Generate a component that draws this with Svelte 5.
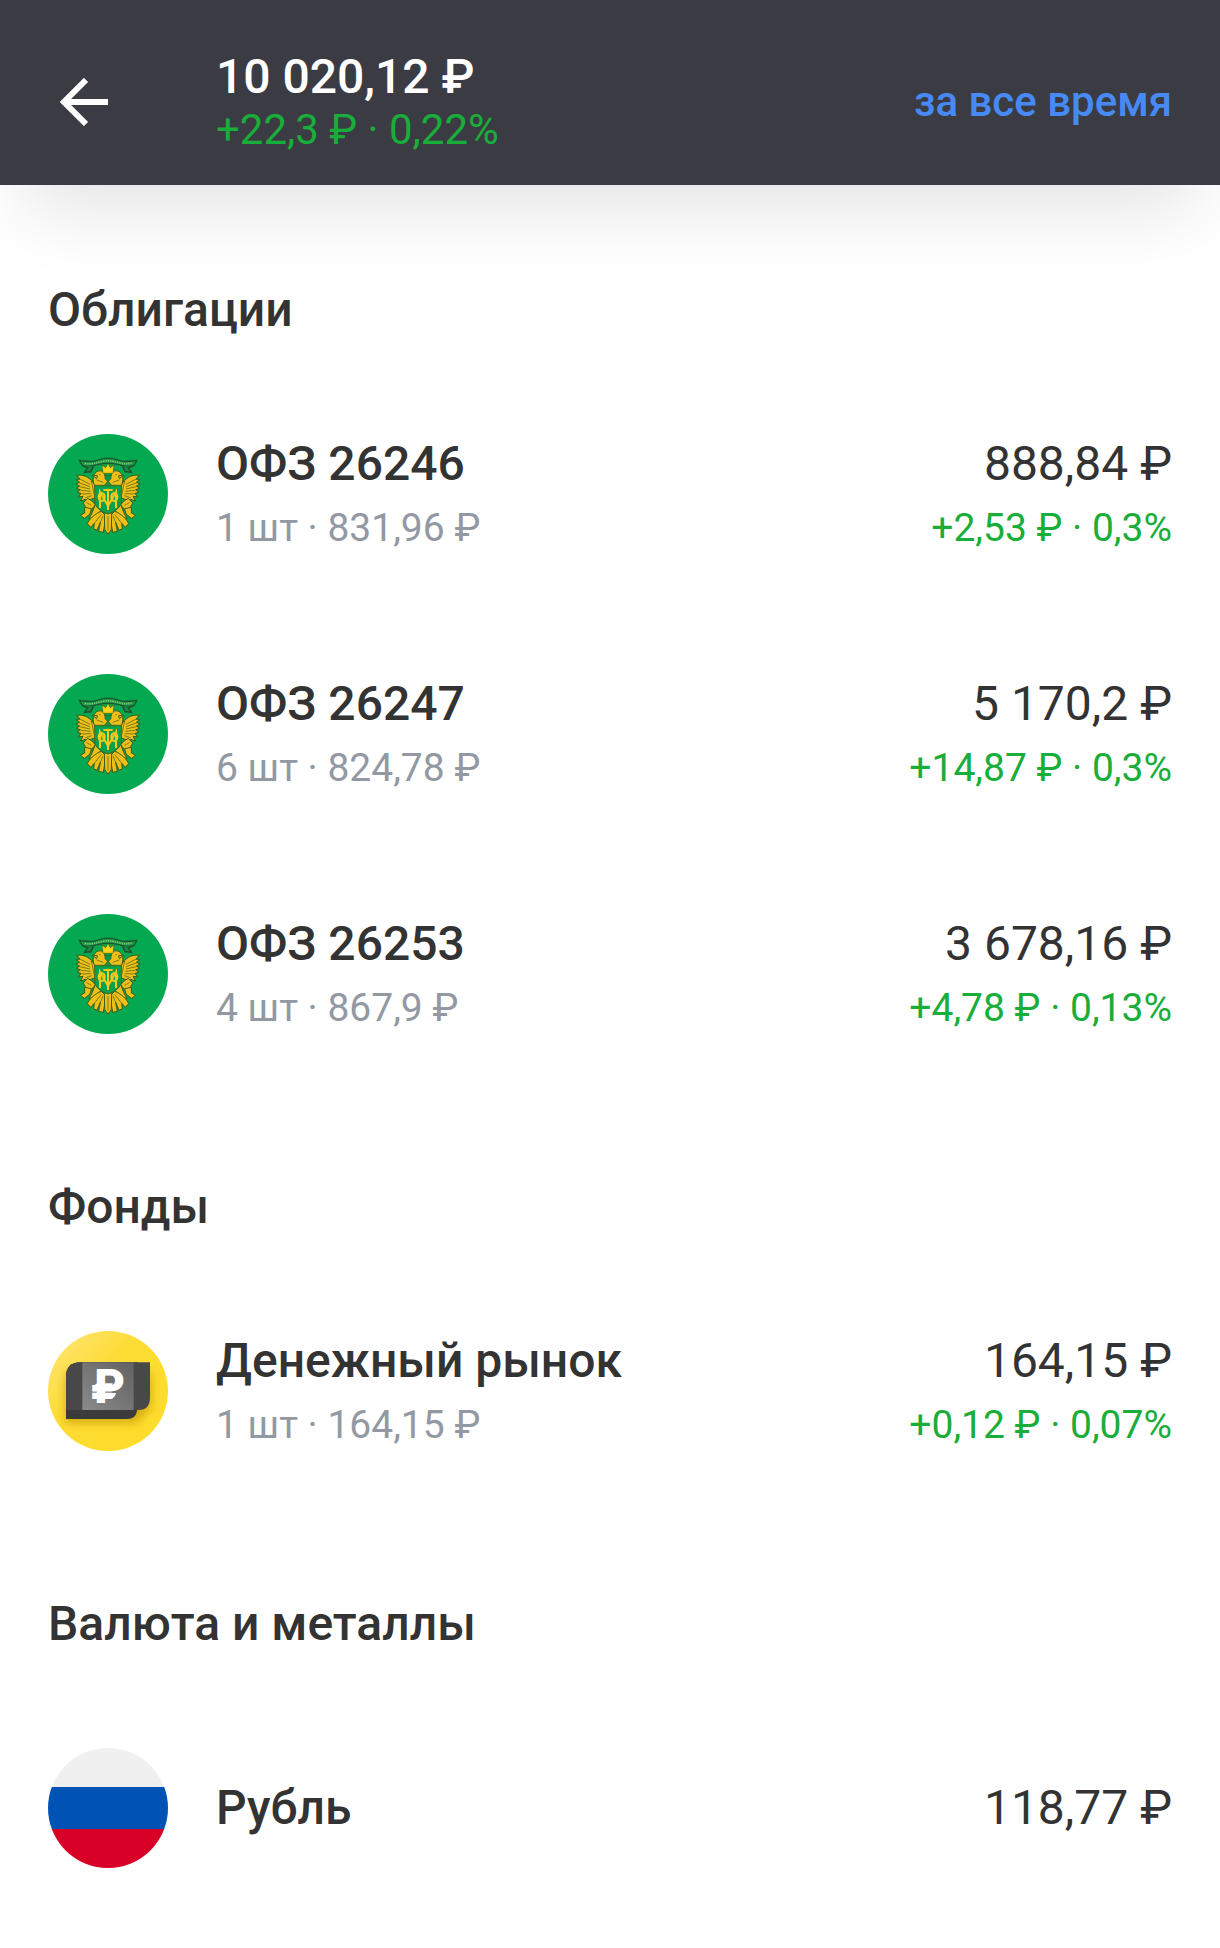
<script>
  const sections = [
    {
      title: 'Облигации',
      items: [
        { icon: 'bond', name: 'ОФЗ 26246', detail: '1 шт · 831,96 ₽', value: '888,84 ₽', gain: '+2,53 ₽ · 0,3%' },
        { icon: 'bond', name: 'ОФЗ 26247', detail: '6 шт · 824,78 ₽', value: '5 170,2 ₽', gain: '+14,87 ₽ · 0,3%' },
        { icon: 'bond', name: 'ОФЗ 26253', detail: '4 шт · 867,9 ₽', value: '3 678,16 ₽', gain: '+4,78 ₽ · 0,13%' }
      ]
    },
    {
      title: 'Фонды',
      items: [
        { icon: 'fund', name: 'Денежный рынок', detail: '1 шт · 164,15 ₽', value: '164,15 ₽', gain: '+0,12 ₽ · 0,07%' }
      ]
    },
    {
      title: 'Валюта и металлы',
      items: [{ icon: 'ruble', name: 'Рубль', value: '118,77 ₽' }]
    }
  ];
</script>

{#snippet wing()}
  <g fill="#eebf18" stroke="#3f5a1c" stroke-width="3" stroke-linejoin="round">
    <path d="M164 178 C152 160 138 147 110 150 L120 161 L108 163 L119 171 L108 176 L119 182 L109 189 L121 193 L111 201 L124 204 L114 215 L129 213 L121 227 L136 222 L137 233 L150 223 L168 216 Z" />
    <path d="M160 170 C158 150 164 140 176 137 C187 134 194 142 194 150 L203 168 L194 180 L164 182 Z" />
    <path d="M172 151 L157 150 L170 160 Z" />
    <path d="M143 219 L156 227 L166 238 L154 254 L138 248 L130 233 Z" />
    <path d="M134 246 L154 250 L150 266 L134 279 L121 270 L134 263 Z" />
    <path d="M166 238 L182 256 L168 273 L147 280 L156 263 Z" />
    <path d="M184 258 C162 266 148 282 142 295 L152 306 L163 294 L161 310 L171 315 L181 291 L176 318 L190 321 L198 272 Z" />
  </g>
  <g fill="none" stroke="#3f5a1c" stroke-width="2">
    <path d="M120 161 L150 177 M119 173 L150 184 M119 184 L150 191 M122 195 L152 198 M126 206 L154 205 M136 217 L156 211" />
    <path d="M154 166 L164 214 M178 146 L181 150 M170 164 L190 171 M140 232 L155 240" />
    <path d="M184 267 L163 294 M189 272 L181 291" />
  </g>
{/snippet}

{#snippet bondIcon()}
  <svg class="icon" viewBox="24 26 360 360" aria-hidden="true">
    <circle cx="204" cy="206" r="180" fill="#04a850" />
    {@render wing()}
    <g transform="matrix(-1 0 0 1 408 0)">{@render wing()}</g>
    <path d="M193 266 L204 257 L215 266 L214 312 L204 327 L194 312 Z" fill="#eebf18" stroke="#3f5a1c" stroke-width="3" />
    <path d="M204 272 V316" stroke="#3f5a1c" stroke-width="2" />
    <path d="M189 144 L186 119 L197 127 L204 114 L211 127 L222 119 L219 144 Z" fill="#fbd216" stroke="#42601d" stroke-width="2" />
    <path d="M195 150 H213 V160 L204 169 L195 160 Z" fill="#08964a" stroke="#3f5a1c" stroke-width="2" />
    <path d="M164 180 H244 V226 C244 246 226 258 204 266 C182 258 164 246 164 226 Z" fill="#08a04c" stroke="#4b681e" stroke-width="3" />
    <g fill="none" stroke="#f5ca1b" stroke-width="6">
      <path d="M180 248 V200 L204 242 L228 200 V248" />
      <path d="M190 194 H218 M204 190 V254" />
      <ellipse cx="185" cy="215" rx="9" ry="12" />
      <ellipse cx="223" cy="215" rx="9" ry="12" />
    </g>
    <path d="M118 105 C143 108 151 112 172 105 C192 97 216 97 236 105 C257 112 265 108 290 105 L282 121 C257 127 249 121 232 117 C212 113 195 113 176 117 C159 121 151 127 127 121 Z" fill="#139d4c" stroke="#1d562d" stroke-width="4" />
    <path d="M128 121 L143 127 L134 141 L152 139 L160 124 M280 121 L265 127 L274 141 L256 139 L248 124" fill="#188b45" stroke="#1d562d" stroke-width="5" />
    <path d="M134 114 C158 119 168 112 187 108 C205 105 221 107 237 112 C252 117 261 116 275 113" fill="none" stroke="#8fc16a" stroke-width="5" stroke-dasharray="4 3" />
  </svg>
{/snippet}

{#snippet fundIcon()}
  <svg class="icon" viewBox="24 33 360 360" aria-hidden="true">
    <defs>
      <linearGradient id="fund-yellow" x1="0" y1="0" x2="1" y2="1">
        <stop offset="0.1" stop-color="#ffe36b" />
        <stop offset="0.4" stop-color="#fddc35" />
        <stop offset="1" stop-color="#fedc27" />
      </linearGradient>
      <linearGradient id="fund-plate" x1="0" y1="1" x2="1" y2="0">
        <stop offset="0" stop-color="#8a8a8b" />
        <stop offset="1" stop-color="#616162" />
      </linearGradient>
      <clipPath id="fund-disc"><circle cx="204" cy="213" r="180" /></clipPath>
      <filter id="fund-blur" x="-30%" y="-30%" width="160%" height="160%"><feGaussianBlur stdDeviation="12" /></filter>
    </defs>
    <g clip-path="url(#fund-disc)">
      <rect x="24" y="33" width="360" height="360" fill="url(#fund-yellow)" />
      <path d="M76 160 H334 V264 L286 310 H76 Z" fill="#b88b00" opacity="0.55" filter="url(#fund-blur)" />
    </g>
    <path d="M78 168 C78 142 94 127 120 127 H292 V258 C292 284 285 297 259 297 H78 Z" fill="#3b3b3c" />
    <path d="M78 168 C78 142 94 127 120 127 H330 V230 C330 256 320 270 294 270 H78 Z" fill="#484849" />
    <rect x="127" y="127" width="154" height="143" fill="url(#fund-plate)" />
    <text x="152" y="250" class="fund-sign">₽</text>
    <path d="M159 209 C162 198 165 190 176 190 H218 C214 203 208 209 198 209 Z" fill="#fff" />
    <path d="M159 237 C162 226 166 219 178 219 H228 C224 232 218 237 207 237 Z" fill="#fff" />
  </svg>
{/snippet}

{#snippet rubleIcon()}
  <svg class="icon" viewBox="24 24 360 360" aria-hidden="true">
    <clipPath id="flag-disc"><circle cx="204" cy="204" r="180" /></clipPath>
    <g clip-path="url(#flag-disc)">
      <rect x="24" y="24" width="360" height="117" fill="#f0f0f0" />
      <rect x="24" y="141" width="360" height="126" fill="#0052b4" />
      <rect x="24" y="267" width="360" height="117" fill="#d80027" />
    </g>
  </svg>
{/snippet}

<header>
  <button class="back" aria-label="Назад">
    <svg viewBox="0 0 48 48" aria-hidden="true">
      <path d="M48 24 H4 M26 2 L4 24 L26 46" fill="none" stroke="#fff" stroke-width="6" />
    </svg>
  </button>
  <div class="summary">
    <h1>10 020,12 ₽</h1>
    <p>+22,3 ₽ · 0,22%</p>
  </div>
  <button class="period">за все время</button>
</header>

<main>
  {#each sections as section}
    <section>
      <h2>{section.title}</h2>
      <ul>
        {#each section.items as item}
          <li>
            {#if item.icon === 'bond'}
              {@render bondIcon()}
            {:else if item.icon === 'fund'}
              {@render fundIcon()}
            {:else}
              {@render rubleIcon()}
            {/if}
            <div class="info">
              <h3>{item.name}</h3>
              {#if item.detail}<p class="detail">{item.detail}</p>{/if}
            </div>
            <div class="amount">
              <p class="value">{item.value}</p>
              {#if item.gain}<p class="gain">{item.gain}</p>{/if}
            </div>
          </li>
        {/each}
      </ul>
    </section>
  {/each}
</main>

<style>
  :global(body) {
    margin: 0;
    background: #fff;
    color: #333;
    font-family: Roboto, sans-serif;
  }

  h1, h2, h3, p, ul {
    margin: 0;
    padding: 0;
  }

  button {
    border: 0;
    padding: 0;
    background: none;
    font-family: inherit;
    cursor: pointer;
  }

  header {
    display: flex;
    align-items: center;
    padding: 49px 48px 30px;
    background: #3b3b44;
    box-shadow: 0 48px 76px -24px rgba(0, 0, 0, 0.11);
  }

  .back {
    display: flex;
    width: 168px;
    padding-left: 12px;
    box-sizing: border-box;
  }

  .back svg {
    width: 48px;
    height: 48px;
  }

  .summary {
    flex: 1;
  }

  h1 {
    color: #fff;
    font-size: 48px;
    font-weight: 500;
    line-height: 56px;
  }

  .summary p {
    color: #19ad3a;
    font-size: 42px;
    line-height: 50px;
  }

  .period {
    color: #478af5;
    font-size: 42px;
    font-weight: 500;
    line-height: 48px;
  }

  main {
    padding: 12px 48px 20px;
  }

  h2 {
    padding: 85px 0 36px;
    font-size: 48px;
    font-weight: 500;
    line-height: 56px;
  }

  ul {
    list-style: none;
  }

  li {
    display: flex;
    align-items: center;
    min-height: 240px;
  }

  .icon {
    flex: none;
    width: 120px;
    height: 120px;
    margin-right: 48px;
  }

  .info {
    flex: 1;
  }

  .info, .amount {
    display: flex;
    flex-direction: column;
    gap: 12px;
  }

  .amount {
    text-align: right;
  }

  h3, .value {
    font-size: 48px;
    line-height: 56px;
  }

  h3 {
    font-weight: 500;
  }

  .detail, .gain {
    font-size: 39px;
    line-height: 48px;
  }

  .detail {
    color: #9299a2;
  }

  .gain {
    color: #19ad3a;
  }

  .fund-sign {
    fill: #fff;
    font-size: 142px;
    font-weight: 900;
  }
</style>
